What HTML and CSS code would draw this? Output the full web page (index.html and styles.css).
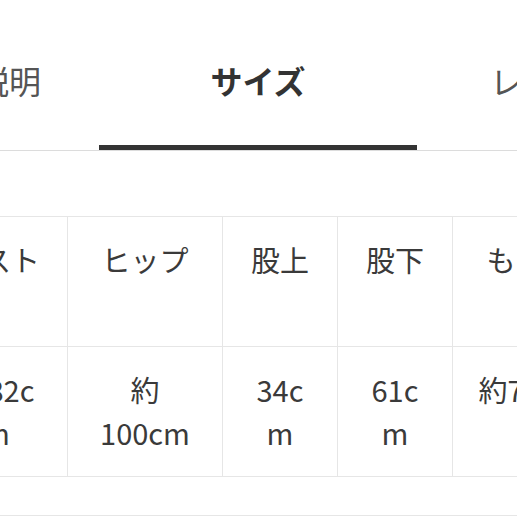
FILE: index.html
```html
<!DOCTYPE html>
<html lang="ja">
<head>
<meta charset="utf-8">
<link rel="stylesheet" href="styles.css">
</head>
<body>
<nav class="tabs">
  <div class="tab tab-first">商品説明</div>
  <div class="tab tab-active">サイズ</div>
  <div class="tab tab-last">レビュー</div>
</nav>
<div class="size-table">
  <div class="cell cell-keep">バスト</div>
  <div class="cell">ヒップ</div>
  <div class="cell">股上</div>
  <div class="cell">股下</div>
  <div class="cell">もも周り</div>
  <div class="cell cell-keep">約82cm</div>
  <div class="cell">約100cm</div>
  <div class="cell">34cm</div>
  <div class="cell">61cm</div>
  <div class="cell">約70cm</div>
</div>
<div class="next-section"></div>
</body>
</html>
```
FILE: styles.css
```css
html, body {
  margin: 0;
  padding: 0;
  background: #fff;
  overflow: hidden;
}
body {
  font-family: "Noto Sans CJK JP", "Noto Sans", sans-serif;
  color: #333;
  width: 517px;
}
.tabs {
  display: flex;
  padding-top: 58px;
  border-bottom: 1px solid #dcdcdc;
  margin-left: -87px;
  white-space: nowrap;
}
.tab {
  flex: 0 0 auto;
  font-size: 32px;
  line-height: 44px;
  padding-bottom: 43px;
  border-bottom: 5px solid transparent;
  color: #555;
}
.tab-first {
  padding-right: 58px;
}
.tab-active {
  width: 318px;
  text-align: center;
  font-weight: 700;
  color: #333;
  border-bottom-color: #333;
}
.tab-last {
  padding-left: 73px;
}
.size-table {
  display: grid;
  grid-template-columns: 142px 155px 115px 115px 155px;
  margin-top: 65px;
  margin-left: -74px;
  border-top: 1px solid #e6e6e6;
  width: max-content;
}
.cell {
  box-sizing: border-box;
  padding: 21px 25px 22px;
  border-right: 1px solid #e6e6e6;
  border-bottom: 1px solid #e6e6e6;
  font-size: 29px;
  line-height: 43px;
  text-align: center;
  color: #3a3a3a;
  overflow-wrap: anywhere;
}
.cell-keep {
  word-break: keep-all;
}
.next-section {
  margin-top: 38px;
  border-top: 1px solid #e6e6e6;
  height: 20px;
}
```
